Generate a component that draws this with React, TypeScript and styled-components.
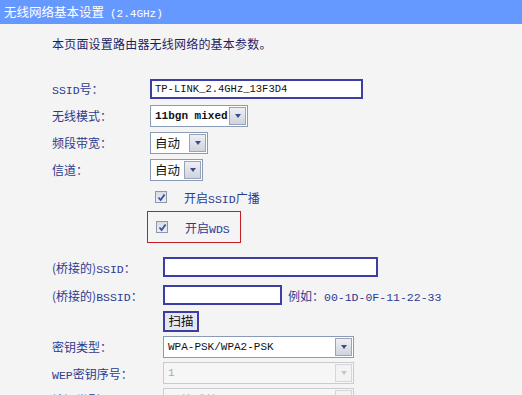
import styled, {createGlobalStyle} from "styled-components";

const GlobalStyle = createGlobalStyle`
  html, body {
    margin: 0;
    overflow: hidden;
    background: #f4f4f4;
    font-family: "Noto Sans CJK SC", sans-serif;
    font-size: 12px;
  }
`;

const TitleBar = styled.div`
  height: 24px;
  line-height: 23px;
  padding-left: 4px;
  background: #6699ff;
  color: #ffffff;
  font-size: 12.5px;
  font-family: "Noto Sans CJK SC", sans-serif;
`;

const TitleTail = styled.span`
  font-family: "Liberation Mono", monospace;
  font-size: 11px;
  margin-left: 6px;
`;

const Content = styled.div`
  padding-left: 52px;
`;

const Intro = styled.div`
  height: 20px;
  line-height: 20px;
  margin-top: 10px;
  margin-bottom: 21px;
  color: #1f1f66;
  letter-spacing: 0.2px;
`;

const Row = styled.div<{$h: number}>`
  display: flex;
  align-items: center;
  height: ${p => p.$h}px;
`;

const Label = styled.div<{$w: number}>`
  width: ${p => p.$w}px;
  flex: none;
  color: #2b3b92;
  white-space: nowrap;
`;

const Mono = styled.span`
  font-family: "Liberation Mono", monospace;
  font-size: 11.5px;
`;

const TextBox = styled.div<{$w: number}>`
  box-sizing: border-box;
  width: ${p => p.$w}px;
  height: 20px;
  border: 2px solid #3d3da6;
  background: #ffffff;
  padding-left: 3px;
  line-height: 16px;
  font-family: "Liberation Mono", monospace;
  font-size: 10.5px;
  color: #111;
`;

const Select = styled.div<{$w: number; $off?: boolean}>`
  box-sizing: border-box;
  display: flex;
  align-items: center;
  justify-content: space-between;
  width: ${p => p.$w}px;
  height: 22px;
  border: 1px solid ${p => (p.$off ? "#c9cbd0" : "#8a9bb8")};
  background: ${p => (p.$off ? "#f6f6f6" : "#ffffff")};
  color: ${p => (p.$off ? "#a9a9a9" : "#111")};
  padding-left: 4px;
`;

const Value = styled.span<{$mono?: boolean; $bold?: boolean}>`
  font-family: ${p => (p.$mono ? '"Liberation Mono", monospace' : '"Noto Sans CJK SC", sans-serif')};
  font-size: ${p => (p.$mono ? "11px" : "12.5px")};
  font-weight: ${p => (p.$bold ? 700 : 400)};
  white-space: nowrap;
`;

const Arrow = styled.span<{$off?: boolean}>`
  box-sizing: border-box;
  display: flex;
  align-items: center;
  justify-content: center;
  width: 17px;
  height: 18px;
  margin-right: 1px;
  border: 1px solid ${p => (p.$off ? "#d4d6da" : "#9aa3b8")};
  background: ${p => (p.$off ? "#f3f3f3" : "linear-gradient(#eef0f4, #cfd3dc)")};
  &::after {
    content: "";
    border-left: 3.5px solid transparent;
    border-right: 3.5px solid transparent;
    border-top: 4px solid ${p => (p.$off ? "#c4c4c4" : "#3a4a8c")};
  }
`;

const CheckRow = styled.div<{$boxed?: boolean}>`
  box-sizing: border-box;
  display: flex;
  align-items: center;
  gap: 17px;
  margin-left: ${p => (p.$boxed ? 95 : 98)}px;
  width: ${p => (p.$boxed ? "94px" : "auto")};
  height: ${p => (p.$boxed ? 32 : 28)}px;
  padding-left: ${p => (p.$boxed ? 8 : 5)}px;
  border: ${p => (p.$boxed ? "1.5px solid #c41e24" : "none")};
  color: #2b3b92;
`;

const Check = styled.span`
  box-sizing: border-box;
  display: flex;
  align-items: center;
  justify-content: center;
  width: 12px;
  height: 12px;
  border: 1px solid #8e98ac;
  background: linear-gradient(#d9dce4, #eceef2);
`;

const Hint = styled.span`
  margin-left: 6px;
  color: #2b3b92;
`;

const ScanButton = styled.div`
  box-sizing: border-box;
  width: 36px;
  height: 21px;
  border: 2px solid #3d3da6;
  background: #e6e7f0;
  text-align: center;
  line-height: 16px;
  font-size: 12.5px;
  color: #111;
`;

const Tick = () => (
  <svg width="9" height="9" viewBox="0 0 9 9">
    <path d="M1.5 4.5 L3.6 7 L7.6 1.5" fill="none" stroke="#3b4f9a" strokeWidth="1.8" />
  </svg>
);

type DropdownProps = {w: number; children: string; mono?: boolean; bold?: boolean; off?: boolean};

const Dropdown = ({w, children, mono, bold, off}: DropdownProps) => (
  <Select $w={w} $off={off}>
    <Value $mono={mono} $bold={bold}>{children}</Value>
    <Arrow $off={off} />
  </Select>
);

export default function App() {
  return <>
    <GlobalStyle/>
    <TitleBar>无线网络基本设置<TitleTail>(2.4GHz)</TitleTail></TitleBar>
    <Content>
      <Intro>本页面设置路由器无线网络的基本参数。</Intro>
      <Row $h={27}>
        <Label $w={98}><Mono>SSID</Mono>号：</Label>
        <TextBox $w={213}>TP-LINK_2.4GHz_13F3D4</TextBox>
      </Row>
      <Row $h={27}>
        <Label $w={98}>无线模式：</Label>
        <Dropdown w={98} mono bold>11bgn mixed</Dropdown>
      </Row>
      <Row $h={27}>
        <Label $w={98}>频段带宽：</Label>
        <Dropdown w={58}>自动</Dropdown>
      </Row>
      <Row $h={27}>
        <Label $w={98}>信道：</Label>
        <Dropdown w={53}>自动</Dropdown>
      </Row>
      <CheckRow>
        <Check><Tick/></Check>
        <span>开启<Mono>SSID</Mono>广播</span>
      </CheckRow>
      <CheckRow $boxed>
        <Check><Tick/></Check>
        <span>开启<Mono>WDS</Mono></span>
      </CheckRow>
      <Row $h={10}/>
      <Row $h={28}>
        <Label $w={111}>(桥接的)<Mono>SSID</Mono>：</Label>
        <TextBox $w={215}/>
      </Row>
      <Row $h={28}>
        <Label $w={111}>(桥接的)<Mono>BSSID</Mono>：</Label>
        <TextBox $w={119}/>
        <Hint>例如：<Mono>00-1D-0F-11-22-33</Mono></Hint>
      </Row>
      <Row $h={24}>
        <Label $w={111}/>
        <ScanButton>扫描</ScanButton>
      </Row>
      <Row $h={27}>
        <Label $w={111}>密钥类型：</Label>
        <Dropdown w={191} mono>WPA-PSK/WPA2-PSK</Dropdown>
      </Row>
      <Row $h={26}>
        <Label $w={111}><Mono>WEP</Mono>密钥序号：</Label>
        <Dropdown w={191} mono off>1</Dropdown>
      </Row>
      <Row $h={26}>
        <Label $w={111}>认证类型：</Label>
        <Dropdown w={191} off>开放系统</Dropdown>
      </Row>
    </Content>
  </>;
}
